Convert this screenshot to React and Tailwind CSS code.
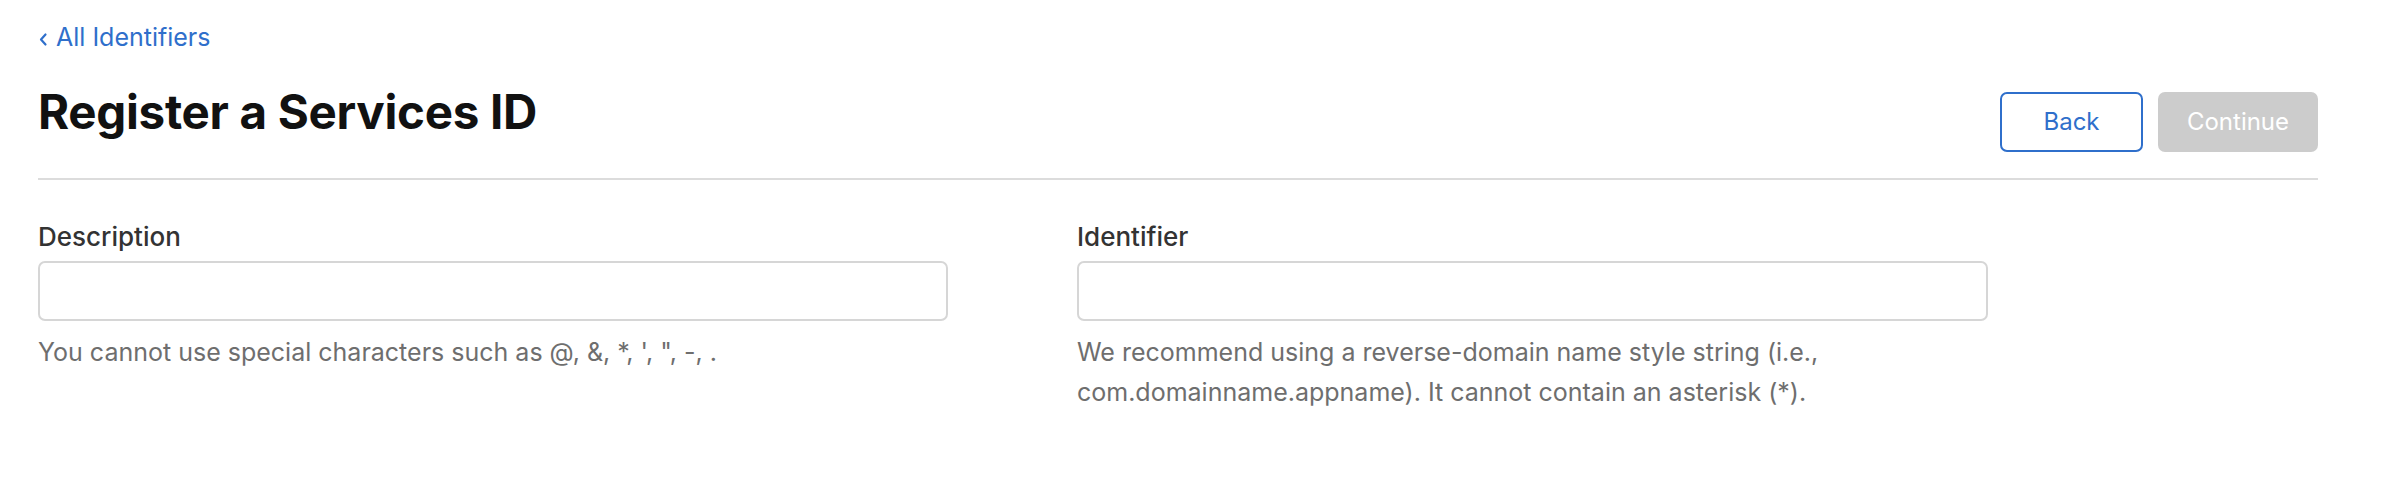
import React from "react";

export default function App() {
  return (
    <div
      className="w-[2386px] h-[478px] bg-white pl-[38px] pr-[68px]"
      style={{ fontFamily: "Inter, 'Noto Sans', sans-serif" }}
    >
      <div className="pt-[21px]">
        <a className="flex items-center gap-[8px] text-[25px] leading-[32px] text-[#2f6fcb] w-max">
          <svg width="10" height="16" viewBox="0 0 10 16" className="mt-[4px]">
            <path d="M7.5 3.5 L3 8.5 L7.5 13.5" fill="none" stroke="#2f6fcb" strokeWidth="2.2" strokeLinecap="round" strokeLinejoin="round" />
          </svg>
          <span>All Identifiers</span>
        </a>
      </div>
      <div className="mt-[31px] flex justify-between items-start pb-[26px] border-b-2 border-[#dcdcdc]">
        <h1 className="text-[47.5px] leading-[56px] font-bold text-[#111111] tracking-[-0.3px]">
          Register a Services ID
        </h1>
        <div className="mt-[8px] flex gap-[15px]">
          <button className="w-[143px] h-[60px] rounded-[7px] border-2 border-[#2f6fcb] text-[#2f6fcb] text-[24px] bg-white">
            Back
          </button>
          <button className="w-[160px] h-[60px] rounded-[7px] bg-[#cccccc] text-white text-[24px]">
            Continue
          </button>
        </div>
      </div>
      <div className="mt-[41px] grid grid-cols-[1039px_1fr]">
        <div>
          <label className="block text-[26px] leading-[32px] font-medium text-[#333333]">Description</label>
          <div className="mt-[8px] w-[910px] h-[60px] rounded-[7px] border-2 border-[#d6d6d6]"></div>
          <p className="mt-[11px] text-[25px] leading-[40px] text-[#6e6e6e]">
            You cannot use special characters such as @, &amp;, *, ', ", -, .
          </p>
        </div>
        <div>
          <label className="block text-[26px] leading-[32px] font-medium text-[#333333]">Identifier</label>
          <div className="mt-[8px] w-[911px] h-[60px] rounded-[7px] border-2 border-[#d6d6d6]"></div>
          <p className="mt-[11px] text-[25px] leading-[40px] text-[#6e6e6e] w-[911px]">
            We recommend using a reverse-domain name style string (i.e.,
            <br />
            com.domainname.appname). It cannot contain an asterisk (*).
          </p>
        </div>
      </div>
    </div>
  );
}
